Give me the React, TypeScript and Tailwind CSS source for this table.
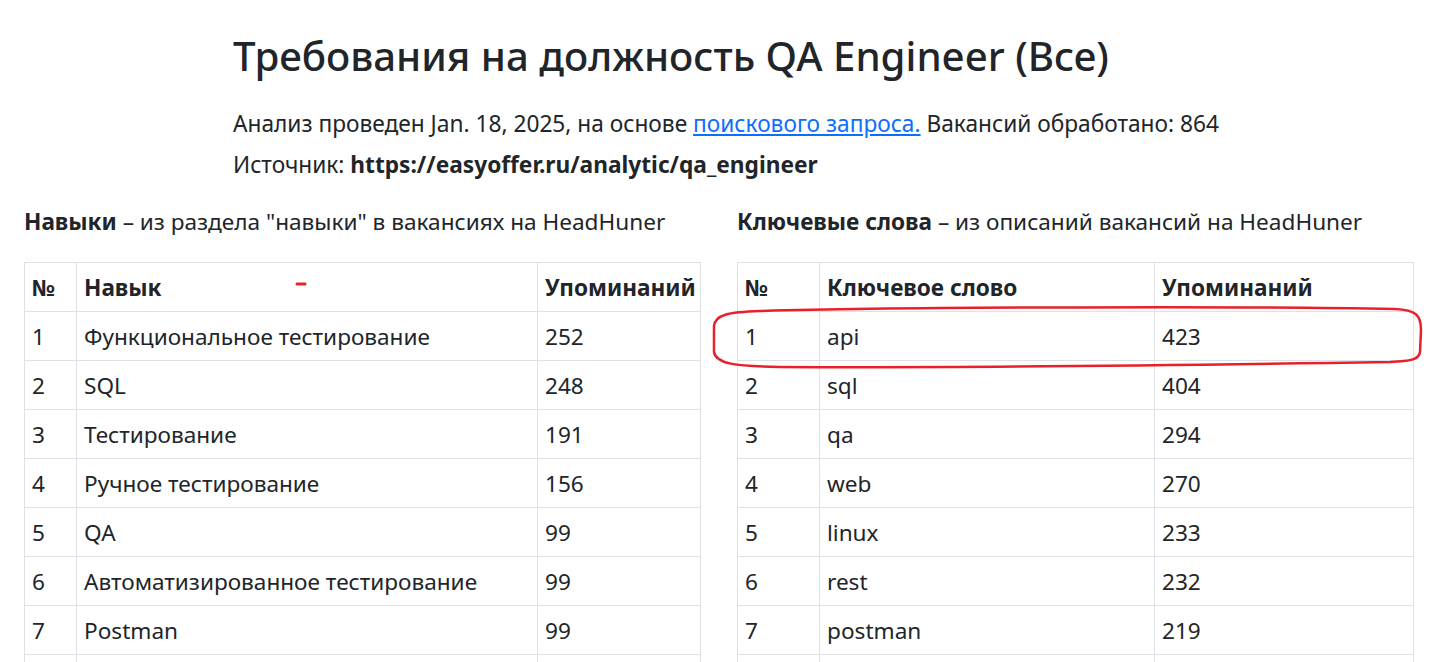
import React from "react";

const skills: [string, string, string][] = [
  ["1", "Функциональное тестирование", "252"],
  ["2", "SQL", "248"],
  ["3", "Тестирование", "191"],
  ["4", "Ручное тестирование", "156"],
  ["5", "QA", "99"],
  ["6", "Автоматизированное тестирование", "99"],
  ["7", "Postman", "99"],
  ["\u00a0", "\u00a0", "\u00a0"],
];

const keywords: [string, string, string][] = [
  ["1", "api", "423"],
  ["2", "sql", "404"],
  ["3", "qa", "294"],
  ["4", "web", "270"],
  ["5", "linux", "233"],
  ["6", "rest", "232"],
  ["7", "postman", "219"],
  ["\u00a0", "\u00a0", "\u00a0"],
];

function DataTable({
  title,
  widths,
  rows,
}: {
  title: string;
  widths: [string, string, string];
  rows: [string, string, string][];
}) {
  return (
    <table className="w-[676px] table-fixed border-collapse text-[22.6px] leading-[32px] text-[#212529]">
      <colgroup>
        <col className={widths[0]} />
        <col className={widths[1]} />
        <col className={widths[2]} />
      </colgroup>
      <thead>
        <tr>
          <th className="border border-[#dee2e6] px-[7px] pt-[9px] pb-[7px] text-left font-bold">№</th>
          <th className="border border-[#dee2e6] px-[7px] pt-[9px] pb-[7px] text-left font-bold">{title}</th>
          <th className="border border-[#dee2e6] px-[7px] pt-[9px] pb-[7px] text-left font-bold whitespace-nowrap">Упоминаний</th>
        </tr>
      </thead>
      <tbody>
        {rows.map((r, i) => (
          <tr key={i}>
            <td className="border border-[#dee2e6] px-[7px] pt-[9px] pb-[7px]">{r[0]}</td>
            <td className="border border-[#dee2e6] px-[7px] pt-[9px] pb-[7px] whitespace-nowrap">{r[1]}</td>
            <td className="border border-[#dee2e6] px-[7px] pt-[9px] pb-[7px]">{r[2]}</td>
          </tr>
        ))}
      </tbody>
    </table>
  );
}

export default function App() {
  return (
    <div
      className="relative h-[662px] w-full overflow-hidden bg-white text-[#212529]"
      style={{ fontFamily: '"Noto Sans", "Open Sans", sans-serif' }}
    >
      <div className="pl-[233px] pt-[32px]">
        <h1 className="text-[40.2px] font-medium leading-[48px] mb-[27px]">
          Требования на должность QA Engineer (Все)
        </h1>
        <div className="text-[22.7px] leading-[33px] mb-[8px]">
          Анализ проведен Jan. 18, 2025, на основе{" "}
          <a href="#" className="text-[#0d6efd] underline">
            поискового запроса.
          </a>{" "}
          Вакансий обработано: 864
        </div>
        <div className="text-[22.7px] leading-[33px]">
          Источник: <b className="font-bold">https://easyoffer.ru/analytic/qa_engineer</b>
        </div>
      </div>

      <div className="mt-[24px] grid grid-cols-[676px_676px] gap-x-[37px] pl-[24px]">
        <div>
          <div className="mb-[24px] text-[22.6px] leading-[33px] whitespace-nowrap">
            <b className="font-bold">Навыки</b> – из раздела "навыки" в вакансиях на HeadHuner
          </div>
          <DataTable title="Навык" widths={["w-[52px]", "w-[461px]", "w-[163px]"]} rows={skills} />
        </div>
        <div>
          <div className="mb-[24px] text-[22.6px] leading-[33px] whitespace-nowrap">
            <b className="font-bold">Ключевые слова</b> – из описаний вакансий на HeadHuner
          </div>
          <DataTable title="Ключевое слово" widths={["w-[82px]", "w-[335px]", "w-[259px]"]} rows={keywords} />
        </div>
      </div>

      <svg
        className="pointer-events-none absolute left-0 top-0"
        width="1429"
        height="662"
        viewBox="0 0 1429 662"
        fill="none"
      >
        <path
          d="M760 311 C 900 307, 1250 306, 1395 309 C 1416 310, 1421 315, 1421 330 L 1420 352 C 1419 360, 1410 361, 1390 362 C 1200 365, 950 368, 780 367 C 735 366, 716 364, 714 352 L 714 326 C 715 315, 728 312, 760 311 Z"
          stroke="#e8202a"
          strokeWidth="2.5"
        />
        <path d="M297 284 L 305 284" stroke="#e8202a" strokeWidth="3" strokeLinecap="round" />
      </svg>
    </div>
  );
}
